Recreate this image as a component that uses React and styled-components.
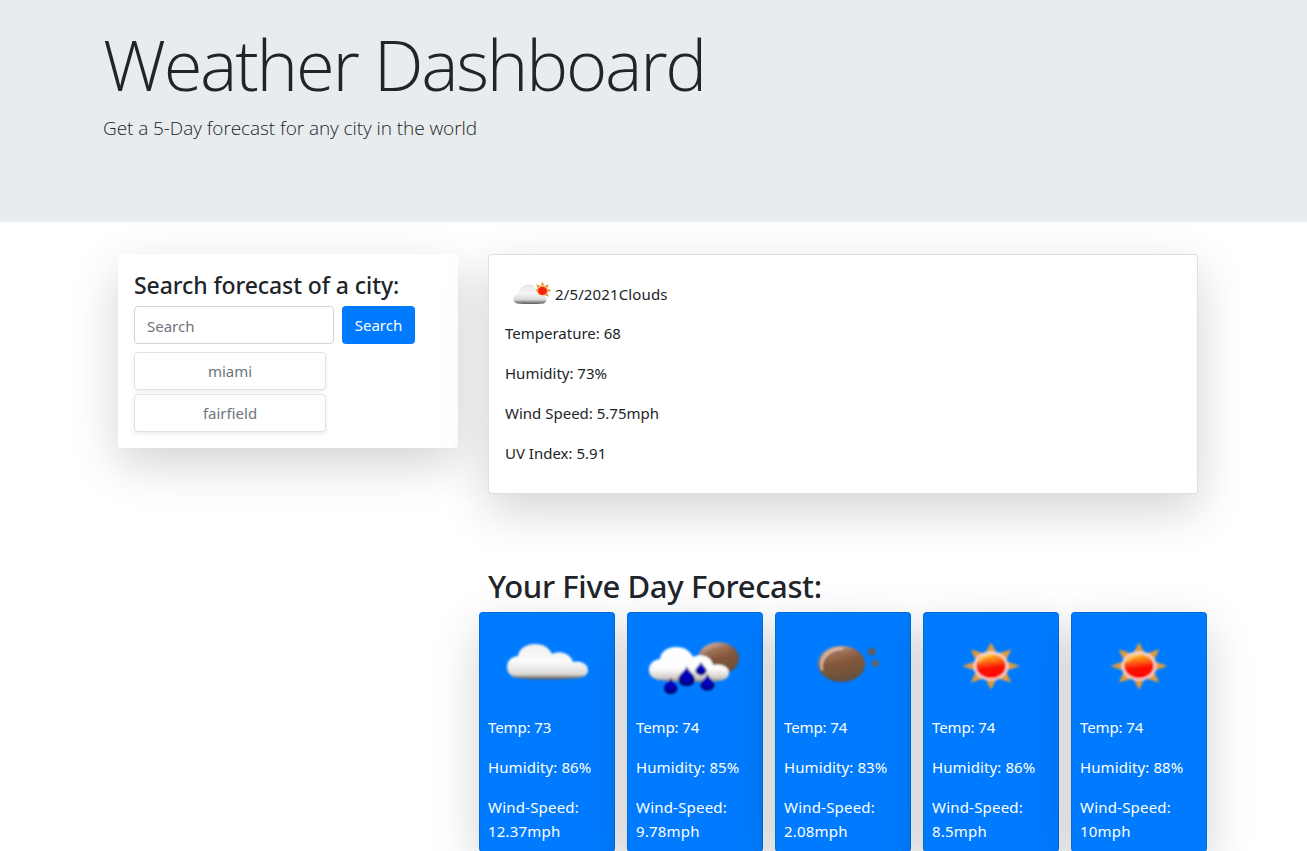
import React from "react";
import styled, { createGlobalStyle } from "styled-components";

const GlobalStyle = createGlobalStyle`
  *, *::before, *::after { box-sizing: border-box; }
  html, body { margin: 0; height: 851px; overflow: hidden; background: #fff; }
  body {
    font-family: "Noto Sans", "Open Sans", sans-serif;
    font-size: 15px;
    line-height: 24px;
    color: #212529;
  }
  h1, h2, h3, p { margin: 0; }
`;

const shadow = "0 16px 48px rgba(0, 0, 0, 0.175)";

const Jumbotron = styled.header`
  height: 222px;
  padding: 21px 0 0 103px;
  background: #e9ecef;
`;

const Title = styled.h1`
  font-family: "Open Sans", "Noto Sans", sans-serif;
  font-size: 70.5px;
  font-weight: 300;
  line-height: 86px;
  letter-spacing: -2.25px;
  white-space: nowrap;
`;

const Lead = styled.p`
  margin-top: 6px;
  font-family: "Open Sans", "Noto Sans", sans-serif;
  font-size: 19px;
  font-weight: 300;
  line-height: 30px;
  letter-spacing: -0.07px;
  white-space: nowrap;
`;

const Main = styled.main`
  display: flex;
  align-items: flex-start;
  gap: 21px;
  padding: 32px 0 0 118px;
`;

const SearchCard = styled.section`
  width: 340px;
  height: 194px;
  padding: 17px 16px 16px;
  border-radius: 4px;
  background: #fff;
  box-shadow: ${shadow};
`;

const SearchTitle = styled.h3`
  font-size: 23px;
  font-weight: 500;
  line-height: 29px;
  margin-bottom: 6px;
  letter-spacing: -0.08px;
  white-space: nowrap;
`;

const SearchForm = styled.form`
  display: flex;
  gap: 8px;
  margin-bottom: 8px;
`;

const SearchInput = styled.input`
  width: 200px;
  height: 38px;
  padding: 8px 12px 6px;
  border: 1px solid #ced4da;
  border-radius: 4px;
  font: inherit;
  color: #495057;
  &::placeholder { color: #6c757d; opacity: 1; }
`;

const SearchButton = styled.button`
  width: 73px;
  height: 38px;
  padding: 0;
  border: 0;
  border-radius: 4px;
  background: #007bff;
  color: #fff;
  font: inherit;
`;

const HistoryList = styled.div`
  display: flex;
  flex-direction: column;
  gap: 4px;
`;

const HistoryButton = styled.button`
  width: 192px;
  height: 38px;
  padding: 0;
  border: 1px solid #dee2e6;
  border-radius: 4px;
  background: #fff;
  color: #6c757d;
  font: inherit;
  box-shadow: 0 2px 4px rgba(0, 0, 0, 0.075);
`;

const Results = styled.div`
  width: 728px;
`;

const CurrentCard = styled.section`
  width: 710px;
  height: 240px;
  margin: 0 9px;
  padding: 14px 16px;
  border: 1px solid rgba(0, 0, 0, 0.125);
  border-radius: 4px;
  background: #fff;
  box-shadow: ${shadow};
`;

const CurrentHeading = styled.p`
  display: flex;
  align-items: center;
  height: 50px;
  margin-bottom: 2px;
  letter-spacing: 0.13px;
`;

const CurrentLine = styled.p`
  margin-bottom: 16px;
`;

const ForecastTitle = styled.h2`
  margin: 73px 0 7px 9px;
  font-size: 31px;
  font-weight: 500;
  line-height: 38px;
  letter-spacing: -0.35px;
  white-space: nowrap;
`;

const ForecastRow = styled.div`
  display: grid;
  grid-template-columns: repeat(5, 136px);
  gap: 12px;
`;

const DayCard = styled.article`
  height: 240px;
  padding: 2px 8px 0;
  border: 1px solid rgba(0, 0, 0, 0.125);
  border-radius: 4px;
  background: #007bff;
  color: #fff;
  box-shadow: ${shadow};
  p { margin-bottom: 16px; }
`;

const DayIcon = styled.svg`
  display: block;
  width: 100px;
  height: 100px;
  margin: 0 auto;
`;

const DayLine = styled.p`
  letter-spacing: ${(p) => p.$spacing || 0}px;
`;

const SmallIcon = styled.svg`
  width: 50px;
  height: 50px;
  flex: none;
`;

const Ray = ({ a, cx, cy, rx, ry, w }) => {
  const t = (a * Math.PI) / 180;
  const point = (ang, k) => `${cx + Math.cos(ang) * rx * k},${cy + Math.sin(ang) * ry * k}`;
  return <polygon points={`${point(t, 1)} ${point(t + w, 0.58)} ${point(t - w, 0.58)}`} fill="#e39a3c" />;
};

const Rays = (props) => [0, 45, 90, 135, 180, 225, 270, 315].map((a) => <Ray key={a} a={a} w={0.36} {...props} />);

const Defs = () => (
  <svg width="0" height="0" style={{ display: "block" }} aria-hidden="true">
    <defs>
      <linearGradient id="cloud" gradientUnits="userSpaceOnUse" x1="0" y1="30" x2="0" y2="66">
        <stop offset="0" stopColor="#f1efee" />
        <stop offset="0.45" stopColor="#fbfbfb" />
        <stop offset="0.8" stopColor="#dedbd9" />
        <stop offset="0.86" stopColor="#b3aeab" />
        <stop offset="0.92" stopColor="#69645f" />
      </linearGradient>
      <linearGradient id="rainCloud" gradientUnits="userSpaceOnUse" x1="0" y1="32" x2="0" y2="68">
        <stop offset="0" stopColor="#fff" />
        <stop offset="0.6" stopColor="#fdfdfd" />
        <stop offset="0.85" stopColor="#d2cdca" />
        <stop offset="1" stopColor="#77716c" />
      </linearGradient>
      <linearGradient id="smallCloud" gradientUnits="userSpaceOnUse" x1="0" y1="30" x2="0" y2="70">
        <stop offset="0" stopColor="#e4e4e3" />
        <stop offset="0.45" stopColor="#f5f5f5" />
        <stop offset="0.78" stopColor="#dadada" />
        <stop offset="0.96" stopColor="#6b6b6b" />
      </linearGradient>
      <linearGradient id="brown" x1="0.3" y1="0" x2="0.6" y2="1">
        <stop offset="0" stopColor="#a87a5e" />
        <stop offset="0.4" stopColor="#84583b" />
        <stop offset="1" stopColor="#67503b" />
      </linearGradient>
      <linearGradient id="brownBase" x1="0.25" y1="0" x2="0.65" y2="0.8">
        <stop offset="0" stopColor="#d6b3a2" />
        <stop offset="0.45" stopColor="#8d6045" />
        <stop offset="1" stopColor="#5e4938" />
      </linearGradient>
      <linearGradient id="sun" x1="0.35" y1="0" x2="0.5" y2="1">
        <stop offset="0" stopColor="#ffc02e" />
        <stop offset="0.3" stopColor="#ff7413" />
        <stop offset="0.58" stopColor="#fb1205" />
        <stop offset="1" stopColor="#ff0000" />
      </linearGradient>
      <radialGradient id="drop">
        <stop offset="0" stopColor="#0000d0" />
        <stop offset="0.6" stopColor="#0000aa" />
        <stop offset="1" stopColor="#00005c" />
      </radialGradient>
      <filter id="soft" x="-10%" y="-10%" width="120%" height="120%">
        <feGaussianBlur stdDeviation="0.8" />
      </filter>
    </defs>
  </svg>
);

const Cloud = () => (
  <path
    d="M19 63C13 61 10 57 10 52C10 46 14 42 21 41C22 33 30 29 38 29C47 29 52 33 55 39C63 35 73 38 76 47C84 45 91 49 91 55C91 59 88 62 82 63Q50 66 19 63Z"
    fill="url(#cloud)"
    filter="url(#soft)"
  />
);

const Drop = ({ x, y, r }) => (
  <path
    d={`M${x} ${y - r * 1.35}C${x + r * 0.25} ${y - r * 0.7} ${x + r} ${y - r * 0.35} ${x + r} ${y + r * 0.2}A${r} ${r * 0.85} 0 0 1 ${x - r} ${y + r * 0.2}C${x - r} ${y - r * 0.35} ${x - r * 0.25} ${y - r * 0.7} ${x} ${y - r * 1.35}Z`}
    fill="url(#drop)"
  />
);

const Rain = () => (
  <g filter="url(#soft)">
    <ellipse cx="73.5" cy="43.5" rx="20.5" ry="16.3" fill="url(#brownBase)" />
    <ellipse cx="75" cy="45.5" rx="17.5" ry="13" fill="url(#brown)" />
    <path
      d="M13 65C7 63 4 60 4 55C4 49 8 45 15 44C16 36 23 32 31 32C40 32 45 36 48 42C56 38 66 41 68 50C77 48 84 52 84 58C84 62 80 65 75 66Q40 68 13 65Z"
      fill="url(#rainCloud)"
    />
    <Drop x={25.7} y={72} r={6.8} />
    <Drop x={41.7} y={62.5} r={8.4} />
    <Drop x={56} y={54.5} r={5.6} />
    <Drop x={62.5} y={68.5} r={7} />
  </g>
);

const Smoke = () => (
  <g filter="url(#soft)">
    <ellipse cx="48.5" cy="49" rx="23.5" ry="18" fill="url(#brownBase)" />
    <ellipse cx="51" cy="50.3" rx="20.3" ry="15.8" fill="url(#brown)" />
    <path d="M29 55C26 43 36 34 50 33.5" fill="none" stroke="#e6c3b4" strokeWidth="2" />
    <circle cx="78.7" cy="36.7" r="3.6" fill="#6c594d" />
    <circle cx="82.3" cy="48.2" r="3.2" fill="#72604e" />
    <circle cx="73" cy="48.5" r="0.8" fill="#566c86" />
  </g>
);

const Sun = () => (
  <g filter="url(#soft)">
    <Rays cx={50} cy={51} rx={28.5} ry={23.5} />
    <ellipse cx="50" cy="51" rx="17.4" ry="14.4" fill="#f5dcd7" />
    <ellipse cx="50" cy="51" rx="15" ry="12.3" fill="url(#sun)" />
    <path d="M38 47C41 42 47 40 52 40" fill="none" stroke="#ffd45c" strokeWidth="1.4" />
  </g>
);

const PartlyCloudy = () => (
  <SmallIcon viewBox="0 0 100 100">
    <g filter="url(#soft)">
      <Rays cx={75} cy={43} rx={18} ry={18} />
      <ellipse cx="75" cy="43" rx="10.5" ry="9.5" fill="#ffa044" />
      <ellipse cx="75" cy="44" rx="9" ry="8" fill="#f8200a" />
      <path
        d="M24 69C18 67 16 63 17 58C18 53 23 51 27 50C28 38 37 31 47 31C56 31 61 35 63 44C65 52 72 54 80 53C85 57 84 67 77 69Q50 71 24 69Z"
        fill="url(#smallCloud)"
      />
    </g>
  </SmallIcon>
);

const days = [
  { Icon: Cloud, temp: 73, humidity: 86, wind: "12.37" },
  { Icon: Rain, temp: 74, humidity: 85, wind: "9.78" },
  { Icon: Smoke, temp: 74, humidity: 83, wind: "2.08" },
  { Icon: Sun, temp: 74, humidity: 86, wind: "8.5" },
  { Icon: Sun, temp: 74, humidity: 88, wind: "10" },
];

export default function App() {
  return (
    <>
      <GlobalStyle />
      <Defs />
      <Jumbotron>
        <Title>Weather Dashboard</Title>
        <Lead>Get a 5-Day forecast for any city in the world</Lead>
      </Jumbotron>
      <Main>
        <SearchCard>
          <SearchTitle>Search forecast of a city:</SearchTitle>
          <SearchForm onSubmit={(e) => e.preventDefault()}>
            <SearchInput placeholder="Search" />
            <SearchButton>Search</SearchButton>
          </SearchForm>
          <HistoryList>
            <HistoryButton>miami</HistoryButton>
            <HistoryButton>fairfield</HistoryButton>
          </HistoryList>
        </SearchCard>
        <Results>
          <CurrentCard>
            <CurrentHeading>
              <PartlyCloudy />
              2/5/2021Clouds
            </CurrentHeading>
            <CurrentLine>Temperature: 68</CurrentLine>
            <CurrentLine>Humidity: 73%</CurrentLine>
            <CurrentLine>Wind Speed: 5.75mph</CurrentLine>
            <CurrentLine>UV Index: 5.91</CurrentLine>
          </CurrentCard>
          <ForecastTitle>Your Five Day Forecast:</ForecastTitle>
          <ForecastRow>
            {days.map(({ Icon, temp, humidity, wind }, i) => (
              <DayCard key={i}>
                <DayIcon viewBox="0 0 100 100">
                  <Icon />
                </DayIcon>
                <DayLine $spacing={-0.1}>Temp: {temp}</DayLine>
                <DayLine $spacing={0.1}>Humidity: {humidity}%</DayLine>
                <DayLine $spacing={0.2}>
                  Wind-Speed:
                  <br />
                  {wind}mph
                </DayLine>
              </DayCard>
            ))}
          </ForecastRow>
        </Results>
      </Main>
    </>
  );
}
